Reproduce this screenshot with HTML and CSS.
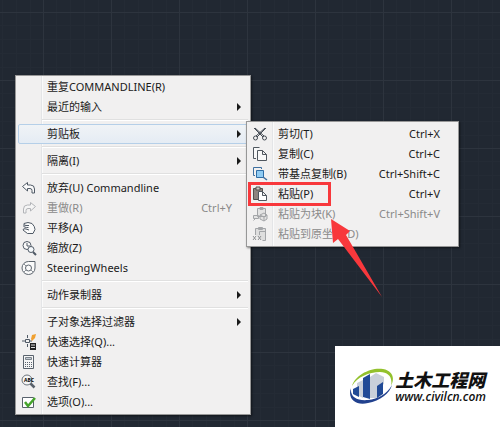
FILE: index.html
```html
<!DOCTYPE html>
<html lang="zh-CN">
<head>
  <meta charset="UTF-8">
  <meta name="viewport" content="width=device-width, initial-scale=1.0">
  <title>剪贴板</title>
  <link rel="stylesheet" href="styles.css">
</head>
<body>

  <main class="canvas">
    <!-- Right-click menu -->
    <ul class="menu">
      <li><button class="item"><span class="icon"></span><span class="label">重复COMMANDLINE(R)</span></button></li>
      <li><button class="item"><span class="icon"></span><span class="label">最近的输入</span><span class="arrow"></span></button></li>
      <li class="separator"></li>
      <li class="has-submenu">
        <button class="item active"><span class="icon"></span><span class="label">剪贴板</span><span class="arrow"></span></button>

        <!-- Clipboard submenu -->
        <ul class="menu submenu">
          <li><button class="item">
            <span class="icon"><svg width="16" height="16" viewBox="0 0 16 16"><path d="M2 2l9 9M14 2l-9 9M3 2l9 8M13 2L4 10" fill="none" stroke="#444b54"/><circle cx="3.500" cy="12" r="2" fill="none" stroke="#444b54"/><circle cx="12.500" cy="12" r="2" fill="none" stroke="#444b54"/></svg></span>
            <span class="label">剪切(T)</span><span class="shortcut">Ctrl+X</span></button></li>
          <li><button class="item">
            <span class="icon"><svg width="16" height="16" viewBox="0 0 16 16"><path d="M4 12.500H1.500v-11h6M5.500 4.500h5l4 4v6h-9zM10.500 4.500v4h4" fill="#f8f8f8" stroke="#50575f"/></svg></span>
            <span class="label">复制(C)</span><span class="shortcut">Ctrl+C</span></button></li>
          <li><button class="item">
            <span class="icon"><svg width="16" height="16" viewBox="0 0 16 16"><path d="M3 9.500H1.500v-8h8V3" fill="none" stroke="#3e6f9f"/><path d="M4.500 4.500h7v7h-7z" fill="#8fcbf3" stroke="#2f6da5"/><path d="M11 11l4 3" stroke="#3e6f9f" stroke-width="1.500"/></svg></span>
            <span class="label">带基点复制(B)</span><span class="shortcut">Ctrl+Shift+C</span></button></li>
          <li class="marked"><button class="item">
            <span class="icon"><svg width="16" height="16" viewBox="0 0 16 16"><path d="M1.500 2.500h9v11h-9z" fill="#8d8580" stroke="#55504c"/><path d="M4 1h4v3H4z" fill="#c9c7c4" stroke="#55504c"/><path d="M6.500 5.500h4l4 4v5h-8zM10.500 5.500v4h4" fill="#fff" stroke="#50575f"/></svg></span>
            <span class="label">粘贴(P)</span><span class="shortcut">Ctrl+V</span></button></li>
          <li><button class="item" disabled>
            <span class="icon"><svg width="16" height="16" viewBox="0 0 16 16"><path d="M5.500 2.500h8v8h-8zM8 1.500h3v2H8zM1.500 9.500h5v3h-5zM1.500 14.500l2-2M8 9l4-2 3 2v4l-3 2-4-2zM8 9l4 2 3-2M12 11v4" fill="#e3e3e3" stroke="#a3a5a8"/></svg></span>
            <span class="label">粘贴为块(K)</span><span class="shortcut">Ctrl+Shift+V</span></button></li>
          <li><button class="item" disabled>
            <span class="icon"><svg width="16" height="16" viewBox="0 0 16 16"><path d="M3.500 9V2.500h10v12h-3M6.500 1.500h4v2h-4zM7.500 9V5.500h6" fill="#dedede" stroke="#a3a5a8"/><path d="M1 10l3 4M4 10l-3 4M6 10l3 4M9 10l-3 4" stroke="#8e9092" fill="none"/></svg></span>
            <span class="label">粘贴到原坐标(D)</span></button></li>
        </ul>
        <svg class="pointer" width="54" height="82" viewBox="0 0 54 82"><path d="M1 1l19 12-4 4 36 62L8 21l-5 4z" fill="#f8383c"/></svg>
      </li>
      <li class="separator"></li>
      <li><button class="item"><span class="icon"></span><span class="label">隔离(I)</span><span class="arrow"></span></button></li>
      <li class="separator"></li>
      <li><button class="item">
        <span class="icon"><svg width="16" height="16" viewBox="0 0 16 16"><path d="M1.500 6.500l5-4v2.500h3q4 0 4 4v4h-2.500V10.500q0-2-2-2H6.500V11z" fill="#fafafa" stroke="#505a66"/></svg></span>
        <span class="label">放弃(U) Commandline</span></button></li>
      <li><button class="item" disabled>
        <span class="icon"><svg width="16" height="16" viewBox="0 0 16 16"><path d="M14.500 6.500l-5-4v2.500h-3q-4 0-4 4v4H5V10.500q0-2 2-2h2.500V11z" fill="#f5f5f5" stroke="#b2b4b8"/></svg></span>
        <span class="label">重做(R)</span><span class="shortcut">Ctrl+Y</span></button></li>
      <li><button class="item">
        <span class="icon"><svg width="16" height="16" viewBox="0 0 16 16"><path d="M3 3.500q4-2 8 0 3 3 3 6l-2 4H6.500L2 10q0-2 3-1L8 10M3 3.500q-1 2 2 2l3 0M2.500 5.500q0 2 3 2h2" fill="#fafafa" stroke="#505a66" stroke-linejoin="round"/></svg></span>
        <span class="label">平移(A)</span></button></li>
      <li><button class="item">
        <span class="icon"><svg width="16" height="16" viewBox="0 0 16 16"><circle cx="6" cy="5.500" r="4" fill="#fafafa" stroke="#505a66"/><path d="M6 3v3h3" fill="none" stroke="#505a66"/><circle cx="10" cy="9.500" r="3" fill="#f4f8fb" stroke="#505a66"/><path d="M12 12l3 3" stroke="#505a66" stroke-width="2"/></svg></span>
        <span class="label">缩放(Z)</span></button></li>
      <li><button class="item">
        <span class="icon"><svg width="16" height="16" viewBox="0 0 16 16"><path d="M7.500 1.500h6.500v6.500a6.500 6.500 0 1 1-6.500-6.500z" fill="#fafafa" stroke="#5d656e"/><circle cx="7.500" cy="8" r="3" fill="none" stroke="#5d656e"/><path d="M3 4l2 2M10 10l2 2M3 12l2-2" stroke="#8b9198"/></svg></span>
        <span class="label">SteeringWheels</span></button></li>
      <li class="separator"></li>
      <li><button class="item"><span class="icon"></span><span class="label">动作录制器</span><span class="arrow"></span></button></li>
      <li class="separator"></li>
      <li><button class="item"><span class="icon"></span><span class="label">子对象选择过滤器</span><span class="arrow"></span></button></li>
      <li><button class="item">
        <span class="icon"><svg width="16" height="16" viewBox="0 0 16 16"><path d="M1 7h3M6.500 1v3M6.500 10v3M9 7h2" stroke="#505a66"/><path d="M4.500 5.500h4v3h-4z" fill="none" stroke="#505a66"/><path d="M10 5l1-4 4-1-1 4-3 3z" fill="#f0a030"/><path d="M9 9h6v7H9z" fill="#222"/><path d="M10 11h4M10 13.500h4" stroke="#ddd"/></svg></span>
        <span class="label">快速选择(Q)...</span></button></li>
      <li><button class="item">
        <span class="icon"><svg width="16" height="16" viewBox="0 0 16 16"><path d="M2.500 1.500h10v13h-10z" fill="#f5f5f5" stroke="#59626c"/><path d="M4.500 3.500h6v2h-6z" fill="#c5ccd3" stroke="#7b838b"/><path d="M4 8.500h7M4 10.500h7M4 12.500h7" stroke="#59626c" stroke-dasharray="1 1"/></svg></span>
        <span class="label">快速计算器</span></button></li>
      <li><button class="item">
        <span class="icon"><svg width="16" height="16" viewBox="0 0 16 16"><circle cx="6" cy="6" r="5" fill="#f5f5f5" stroke="#6b737b"/><path d="M9.500 9.500l4 4" stroke="#59626c" stroke-width="2.500"/><text class="abc" x="3" y="8">ABC</text></svg></span>
        <span class="label">查找(F)...</span></button></li>
      <li><button class="item">
        <span class="icon"><svg width="16" height="16" viewBox="0 0 16 16"><path d="M1.500 3.500h11v10h-11z" fill="#fff" stroke="#59626c"/><path d="M4 8l3 4 7-8" fill="none" stroke="#45a42b" stroke-width="2.500"/></svg></span>
        <span class="label">选项(O)...</span></button></li>
    </ul>
  </main>

  <!-- Site badge -->
  <aside class="badge">
    <svg width="46" height="38" viewBox="0 0 46 38">
      <path d="M8 15l6-3v18l-6-3zM21 9l6-4 8 4v7l-6 4v10h-8z" fill="#c9d0da"/>
      <path d="M4 21l6-3v11l-6-3zM14 10l7-4v25l-7-2zM28 18l6-4v12l-6 4z" fill="#214a96"/>
      <path d="M3 18C6 7 22-1 34 1c10 2 12 9 8 17C44 9 39 4 31 4 20 4 8 9 3 18z" fill="#93c12d"/>
      <path d="M2 20c-4 11 5 18 17 15 12-2 22-10 24-18-5 9-14 14-24 15C8 33 1 29 2 20z" fill="#21418e"/>
    </svg>
    <div class="badge-text">
      <strong>土木工程网</strong>
      <span>www.civilcn.com</span>
    </div>
  </aside>

</body>
</html>
```

FILE: styles.css
```css
*,
*::before,
*::after {
  box-sizing: border-box;
}

body {
  margin: 0;
  min-height: 100vh;
  position: relative;
  overflow: hidden;
  font-family: "Noto Sans", "Noto Sans CJK SC", sans-serif;
  font-size: 11px;
  background-color: #212832;
  background-image:
    linear-gradient(#2d343e 1px, transparent 1px),
    linear-gradient(90deg, #2d343e 1px, transparent 1px),
    repeating-linear-gradient(transparent 0 13px, #242b35 13px 14px),
    repeating-linear-gradient(90deg, transparent 0 13px, #242b35 13px 14px);
  background-size: 68px 68px;
  background-position: 43px 12px;
}

.canvas {
  padding: 75px 15px 14px;
}

.menu {
  list-style: none;
  margin: 0;
  padding: 1px 2px 2px;
  width: 236px;
  border: 1px solid #979797;
  background: linear-gradient(90deg, transparent 25px, #e4e5e7 25px, #e4e5e7 26px, #fafafa 26px, #fafafa 27px, transparent 27px) #f1f0f0;
  box-shadow: 1px 1px 2px rgba(0,0,0,0.5);
}

.item {
  display: flex;
  align-items: center;
  width: 100%;
  height: 20px;
  padding: 0 6px 0 2px;
  border: 1px solid transparent;
  border-radius: 2px;
  background: none;
  color: #1a1a1a;
  font: inherit;
  line-height: 18px;
  text-align: left;
}

.item.active {
  border-color: #b5cfe8;
  background: linear-gradient(#f0f3f6, #e5ecf4);
}

.item:disabled {
  color: #8a8a8a;
}

.icon {
  width: 26px;
  height: 16px;
  flex: none;
}

.icon svg {
  display: block;
}

.abc {
  font-size: 5px;
  font-weight: bold;
}

.label {
  flex: 1;
  white-space: nowrap;
}

.shortcut {
  margin-right: 9px;
}

.arrow {
  border: 4px solid transparent;
  border-left-color: #1a1a1a;
  border-right: 0;
}

.separator {
  height: 7px;
  padding-top: 2px;
  margin-left: 24px;
}

.separator::before {
  content: "";
  display: block;
  height: 2px;
  background: #e0e0e0;
  border-bottom: 1px solid #fff;
}

.has-submenu {
  position: relative;
}

.submenu {
  position: absolute;
  top: -3px;
  left: 228px;
  width: 213px;
  padding: 2px;
}

/* red frame round the paste command */
.marked {
  position: relative;
}

.marked::after {
  content: "";
  position: absolute;
  top: -2px;
  left: -1px;
  width: 83px;
  height: 24px;
  border: 3px solid #f8383c;
}

.pointer {
  position: absolute;
  top: 94px;
  left: 312px;
}

.badge {
  position: absolute;
  right: 0;
  bottom: 0;
  display: flex;
  align-items: center;
  padding: 22px 14px 23px;
  background: #fff;
}

.badge-text {
  display: flex;
  flex-direction: column;
  font-style: italic;
  color: #111;
}

.badge-text strong {
  font-family: "Noto Sans CJK SC", sans-serif;
  font-size: 18px;
  font-weight: 900;
  line-height: 20px;
}

.badge-text span {
  font-family: "Open Sans", sans-serif;
  font-size: 12px;
  font-weight: 600;
  line-height: 16px;
}
```
